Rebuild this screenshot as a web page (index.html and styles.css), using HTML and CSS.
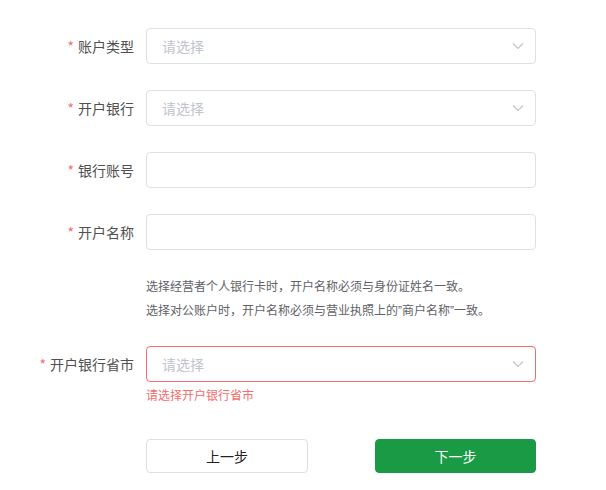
FILE: index.html
```html
<!DOCTYPE html>
<html lang="zh">
<head>
<meta charset="utf-8">
<link rel="stylesheet" href="styles.css">
</head>
<body>
<form class="form">
  <div class="item">
    <label class="label"><span class="req">*</span>账户类型</label>
    <div class="control">
      <div class="select"><span class="ph">请选择</span><svg class="arrow" viewBox="0 0 12 8" width="12" height="8"><path d="M1 1.5 L6 6.5 L11 1.5" fill="none" stroke="#c0c4cc" stroke-width="1.2"/></svg></div>
    </div>
  </div>
  <div class="item">
    <label class="label"><span class="req">*</span>开户银行</label>
    <div class="control">
      <div class="select"><span class="ph">请选择</span><svg class="arrow" viewBox="0 0 12 8" width="12" height="8"><path d="M1 1.5 L6 6.5 L11 1.5" fill="none" stroke="#c0c4cc" stroke-width="1.2"/></svg></div>
    </div>
  </div>
  <div class="item">
    <label class="label"><span class="req">*</span>银行账号</label>
    <div class="control"><div class="input"></div></div>
  </div>
  <div class="item item-help">
    <label class="label"><span class="req">*</span>开户名称</label>
    <div class="control">
      <div class="input"></div>
      <div class="help">
        <p>选择经营者个人银行卡时，开户名称必须与身份证姓名一致。</p>
        <p>选择对公账户时，开户名称必须与营业执照上的<span class="q">”</span>商户名称<span class="q">”</span>一致。</p>
      </div>
    </div>
  </div>
  <div class="item item-error">
    <label class="label"><span class="req">*</span>开户银行省市</label>
    <div class="control">
      <div class="select error"><span class="ph">请选择</span><svg class="arrow" viewBox="0 0 12 8" width="12" height="8"><path d="M1 1.5 L6 6.5 L11 1.5" fill="none" stroke="#c0c4cc" stroke-width="1.2"/></svg></div>
      <div class="err-msg">请选择开户银行省市</div>
    </div>
  </div>
  <div class="item actions">
    <div class="label"></div>
    <div class="control buttons">
      <button type="button" class="btn">上一步</button>
      <button type="button" class="btn btn-primary">下一步</button>
    </div>
  </div>
</form>
</body>
</html>
```

FILE: styles.css
```css
* { box-sizing: border-box; }
body {
  margin: 0;
  background: #fff;
  font-family: "Microsoft YaHei", "Noto Sans CJK SC", "Noto Sans", sans-serif;
  font-size: 14px;
  color: #606266;
}
.form {
  padding-top: 28px;
  width: 536px;
}
.item {
  display: flex;
  align-items: flex-start;
  margin-bottom: 26px;
}
.label {
  width: 146px;
  flex: none;
  padding-right: 12px;
  text-align: right;
  line-height: 36px;
  height: 36px;
  color: #505050;
  font-size: 14px;
}
.req {
  color: #f56c6c;
  margin-right: 4px;
}
.control {
  flex: 1;
}
.select, .input {
  height: 36px;
  border: 1px solid #dcdfe6;
  border-radius: 4px;
  display: flex;
  align-items: center;
  justify-content: space-between;
  padding: 0 11px 0 15px;
  background: #fff;
}
.select.error { border-color: #f56c6c; }
.ph {
  color: #c0c4cc;
  font-size: 14px;
}
.arrow { display: block; }
.help {
  margin-top: 24px;
  font-size: 12px;
  color: #606266;
  line-height: 24px;
}
.help p { margin: 0; height: 24px; }
.q { font-family: "Liberation Sans", sans-serif; line-height: 1; }
.item-help { margin-bottom: 24px; }
.err-msg {
  color: #f56c6c;
  font-size: 12px;
  line-height: 1;
  padding-top: 7px;
}
.item-error { margin-bottom: 38px; }
.buttons {
  display: flex;
  justify-content: space-between;
}
.btn {
  width: 162px;
  height: 34px;
  border: 1px solid #dcdfe6;
  border-radius: 4px;
  background: #fff;
  color: #222;
  font-family: inherit;
  font-size: 14px;
  padding: 0;
  cursor: pointer;
}
.btn-primary {
  width: 161px;
  background: #1a9a44;
  border-color: #1a9a44;
  color: #fff;
}
```
